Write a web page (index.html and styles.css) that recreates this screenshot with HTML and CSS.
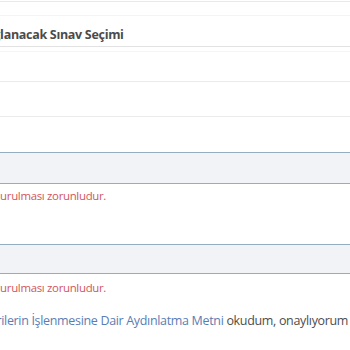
FILE: index.html
```html
<!DOCTYPE html>
<html lang="tr">
<head>
<meta charset="utf-8">
<link rel="stylesheet" href="styles.css">
</head>
<body>
<div class="panel">
  <div class="rule-top"></div>
  <div class="rule-sub"></div>
  <div class="title"><span class="shift-title">Bağlanacak Sınav Seçimi</span></div>
  <div class="rule-faint"></div>
  <div class="blank-field"></div>
  <div class="input input-one"></div>
  <div class="error error-one"><span class="shift-error">Bu alanın doldurulması zorunludur.</span></div>
  <div class="input input-two"></div>
  <div class="error error-two"><span class="shift-error">Bu alanın doldurulması zorunludur.</span></div>
  <div class="consent"><span class="shift-consent"><a class="link" href="#">Kişisel Verilerin İşlenmesine Dair Aydınlatma Metni</a> okudum, onaylıyorum</span></div>
</div>
</body>
</html>
```
FILE: styles.css
```css
html, body {
  margin: 0;
  padding: 0;
  background: #ffffff;
}
body {
  font-family: "Open Sans", "Noto Sans", "DejaVu Sans", sans-serif;
  overflow: hidden;
  width: 350px;
  height: 350px;
}
.panel {
  display: flex;
  flex-direction: column;
  white-space: nowrap;
  overflow: hidden;
}
.rule-top {
  margin-top: 1px;
  border-top: 1px solid #e9e9e9;
}
.rule-sub {
  margin-top: 13px;
  border-top: 1px solid #f4f4f4;
}
.title {
  height: 31px;
  box-sizing: border-box;
  padding-top: 10px;
  font-size: 12.5px;
  line-height: 18px;
  font-weight: 700;
  letter-spacing: -0.3px;
  color: #4b4b4b;
  border-bottom: 1px solid #e2e2e2;
}
.shift-title {
  display: inline-block;
  margin-left: -22px;
}
.rule-faint {
  margin-top: 4px;
  border-top: 1px solid #f5f5f5;
}
.blank-field {
  margin-top: 29px;
  height: 34px;
  border-top: 1px solid #ebebeb;
  border-bottom: 1px solid #ebebeb;
}
.input {
  background: #f1f3f6;
  border-top: 1px solid #93adc1;
  border-bottom: 1px solid #93adc1;
}
.input-one {
  margin-top: 35px;
  height: 30px;
}
.input-two {
  margin-top: 40px;
  height: 28px;
}
.error {
  font-size: 11.4px;
  line-height: 16px;
  letter-spacing: -0.3px;
  color: #d2555c;
}
.error-one {
  margin-top: 4px;
}
.error-two {
  margin-top: 6px;
}
.shift-error {
  display: inline-block;
  margin-left: -72px;
}
.consent {
  margin-top: 16px;
  font-size: 12.5px;
  line-height: 18px;
  letter-spacing: -0.33px;
  color: #4d4d4d;
}
.shift-consent {
  display: inline-block;
  margin-left: -54px;
}
.link {
  color: #5a7db3;
  text-decoration: none;
}
```
